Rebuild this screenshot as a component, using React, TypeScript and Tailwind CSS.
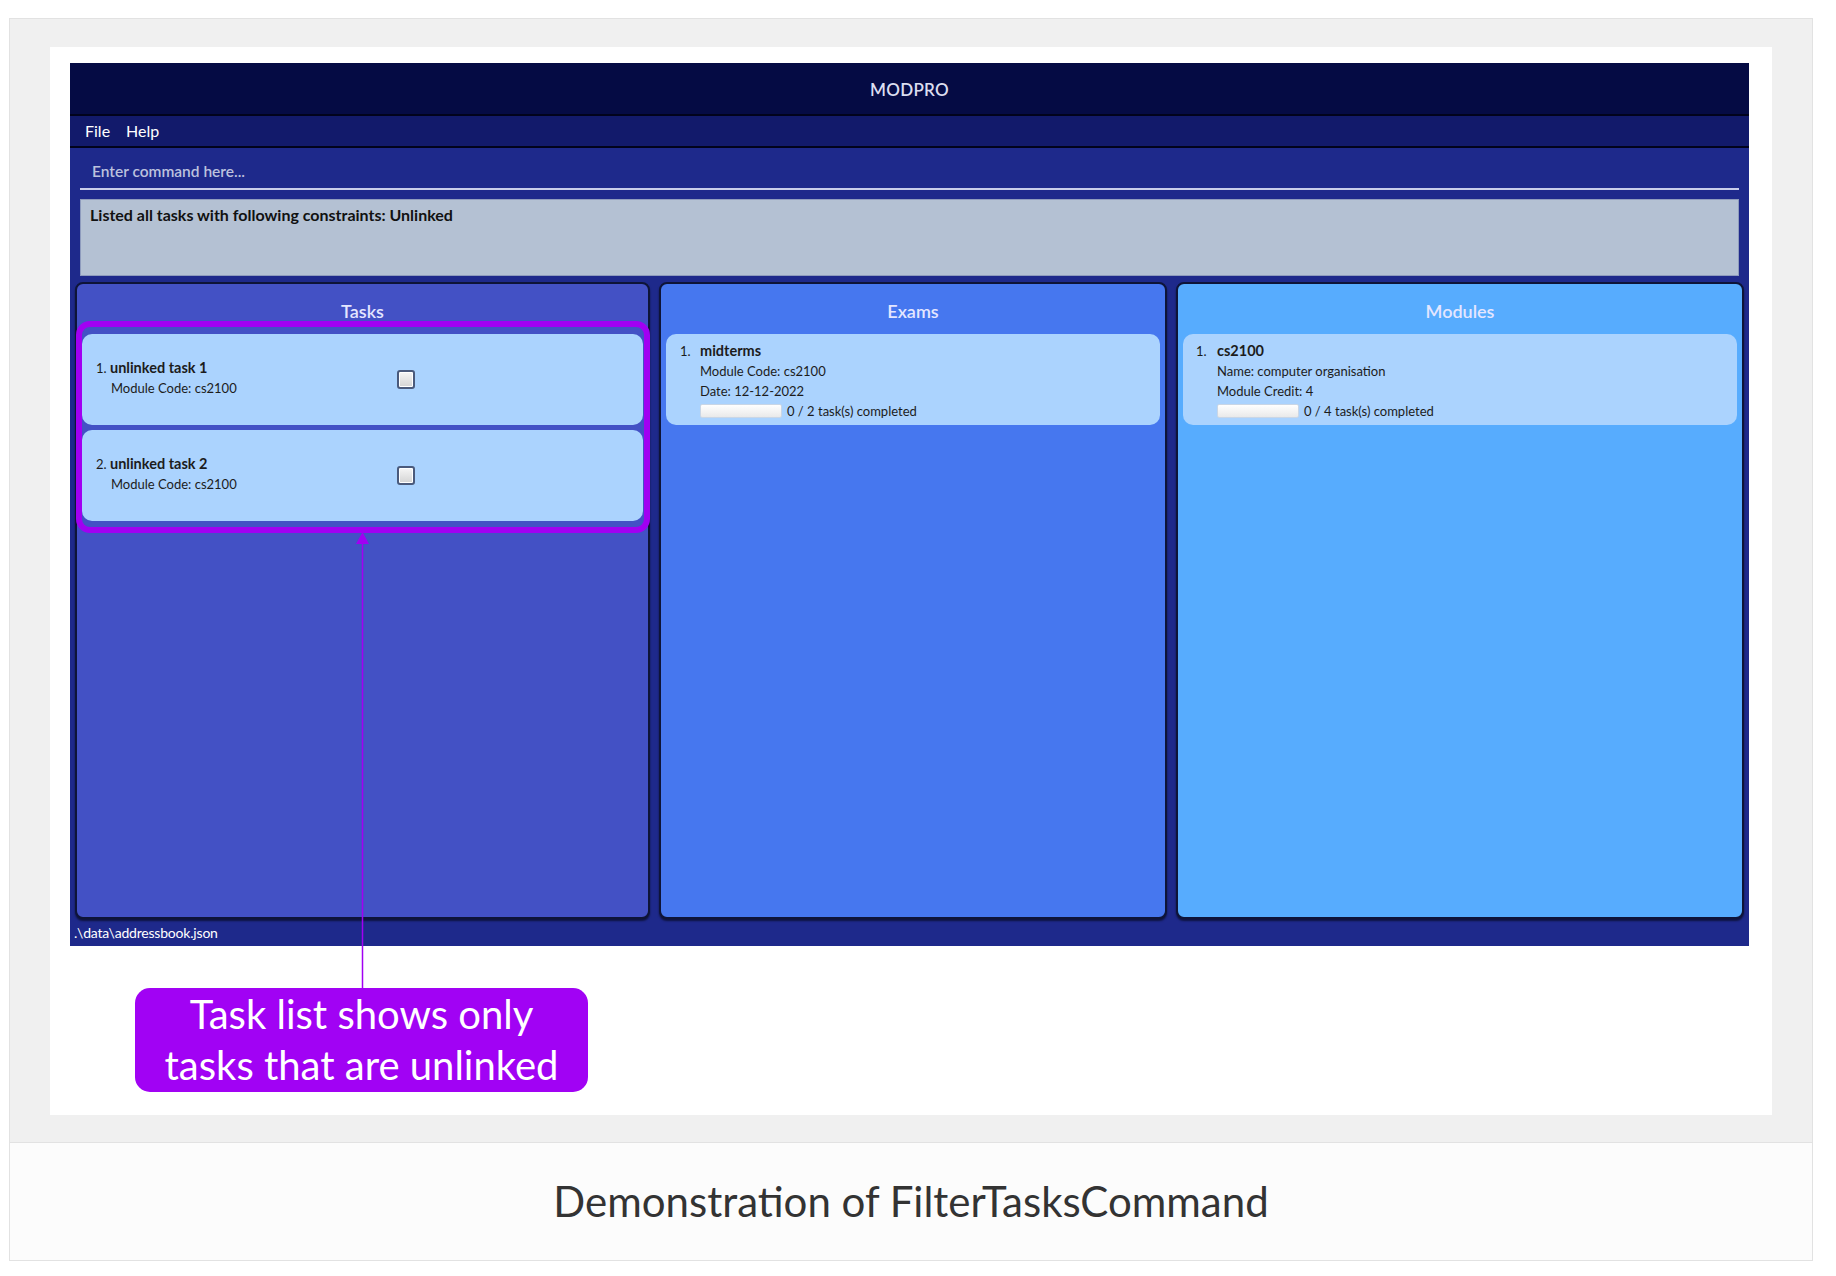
import React from "react";

const font = { fontFamily: "Lato, 'Noto Sans', sans-serif" };

function Checkbox() {
  return (
    <div className="w-[18px] h-[19px] rounded-[3px] border-2 border-[#4a5a7c] bg-gradient-to-b from-[#f6f6f6] to-[#d4d4d4] shadow-[inset_0_0_0_1px_#ffffff]" />
  );
}

function Progress({ done, total }: { done: number; total: number }) {
  return (
    <div className="flex items-center gap-[5px] h-[20px]">
      <div className="w-[82px] h-[14px] rounded-[2px] border border-[#c9d6e6] bg-gradient-to-b from-[#ffffff] to-[#e9e9e9]" />
      <span>
        {done} / {total} task(s) completed
      </span>
    </div>
  );
}

function TaskCard({ index, name, code }: { index: number; name: string; code: string }) {
  return (
    <div className="h-[91px] rounded-[10px] bg-[#abd3fe] flex items-center pl-[14px] text-[13px] text-[#1c1c1c]">
      <div className="w-[301px] leading-[20px] -mt-[4px]">
        <div>
          {index}. <span className="font-bold text-[14.5px]">{name}</span>
        </div>
        <div className="pl-[15px]">Module Code: {code}</div>
      </div>
      <Checkbox />
    </div>
  );
}

function Panel({
  title,
  bg,
  width,
  children,
}: {
  title: string;
  bg: string;
  width: string;
  children: React.ReactNode;
}) {
  return (
    <div
      className={`${bg} ${width} h-full rounded-[8px] border-2 border-[#0e1438] shadow-[0_2px_2px_rgba(0,0,0,0.55)] px-[5px] pt-[15px] flex flex-col`}
    >
      <div className="text-center text-[18px] font-semibold leading-[24px] text-[#e4e6ff] mb-[11px]">{title}</div>
      {children}
    </div>
  );
}

export default function App() {
  return (
    <div className="relative w-[1836px] h-[1276px] bg-white" style={font}>
      <div className="pt-[18px] pl-[9px]">
        <div className="w-[1804px] bg-[#f0f0f0] border border-[#e2e2e2] pt-[28px] pl-[40px] pb-[27px]">
          <div className="w-[1722px] bg-white pt-[16px] pl-[20px] pb-[23px]">
            {/* app window */}
            <div className="w-[1679px] h-[883px] bg-[#1e298b] flex flex-col">
              <div className="h-[53px] bg-[#050b44] border-b-2 border-[#01031c] flex items-center justify-center">
                <span className="text-[17px] font-semibold text-[#dcdef0] tracking-[0.3px] mt-[2px]">MODPRO</span>
              </div>
              <div className="h-[32px] bg-[#121a6b] border-b-2 border-[#01031c] flex items-center gap-[16px] pl-[15px] text-[16px] text-white">
                <span>File</span>
                <span>Help</span>
              </div>
              <div className="px-[10px]">
                <div className="h-[40px] flex items-center pl-[12px] pt-[7px] text-[15.5px] font-semibold text-[#bcc1de]">
                  Enter command here...
                </div>
                <div className="h-[2px] bg-[#c9cdea]" />
                <div className="mt-[9px] h-[77px] bg-[#b4c1d3] border border-[#8e9bbd] pl-[9px] pt-[3px] text-[16px] font-bold text-[#111111]">
                  Listed all tasks with following constraints: Unlinked
                </div>
              </div>
              <div className="mt-[6px] h-[637px] flex gap-[9px] px-[5px]">
                <Panel title="Tasks" bg="bg-[#4351c5]" width="w-[575px]">
                  <div className="flex flex-col gap-[5px]">
                    <TaskCard index={1} name="unlinked task 1" code="cs2100" />
                    <TaskCard index={2} name="unlinked task 2" code="cs2100" />
                  </div>
                </Panel>
                <Panel title="Exams" bg="bg-[#4677ef]" width="w-[508px]">
                  <div className="h-[91px] rounded-[10px] bg-[#abd3fe] pl-[14px] pt-[7px] text-[13px] leading-[20px] text-[#1c1c1c] flex">
                    <span className="w-[20px]">1.</span>
                    <div>
                      <div className="font-bold text-[14.5px]">midterms</div>
                      <div>Module Code: cs2100</div>
                      <div>Date: 12-12-2022</div>
                      <Progress done={0} total={2} />
                    </div>
                  </div>
                </Panel>
                <Panel title="Modules" bg="bg-[#57acfe]" width="w-[568px]">
                  <div className="h-[91px] rounded-[10px] bg-[#abd3fe] pl-[13px] pt-[7px] text-[13px] leading-[20px] text-[#1c1c1c] flex">
                    <span className="w-[21px]">1.</span>
                    <div>
                      <div className="font-bold text-[14.5px]">cs2100</div>
                      <div>Name: computer organisation</div>
                      <div>Module Credit: 4</div>
                      <Progress done={0} total={4} />
                    </div>
                  </div>
                </Panel>
              </div>
              <div className="flex-1 flex items-center pl-[4px] text-[14px] text-white tracking-[-0.2px]">
                .\data\addressbook.json
              </div>
            </div>

            {/* callout */}
            <div className="mt-[42px] ml-[65px] w-[453px] h-[104px] rounded-[15px] bg-[#a102f4] flex flex-col items-center justify-center text-white text-[40px] leading-[51px]">
              <div>Task list shows only</div>
              <div>tasks that are unlinked</div>
            </div>
          </div>
        </div>
        <div className="w-[1804px] h-[118px] bg-[#fcfcfc] border border-t-0 border-[#e2e2e2] flex items-center justify-center text-[42px] text-[#333333]">
          Demonstration of FilterTasksCommand
        </div>
      </div>

      {/* highlight box over the task list */}
      <div className="absolute left-[76px] top-[321px] w-[574px] h-[212px] rounded-[14px] border-[6px] border-[#a100f2] pointer-events-none" />
      {/* arrow from callout to the highlight */}
      <svg className="absolute left-[350px] top-[530px] pointer-events-none" width="26" height="462" viewBox="0 0 26 462">
        <polygon points="6,14 19,14 12.5,2" fill="#a100f2" />
        <line x1="12.5" y1="14" x2="12.5" y2="460" stroke="#a100f2" strokeWidth="1.5" />
      </svg>
    </div>
  );
}
